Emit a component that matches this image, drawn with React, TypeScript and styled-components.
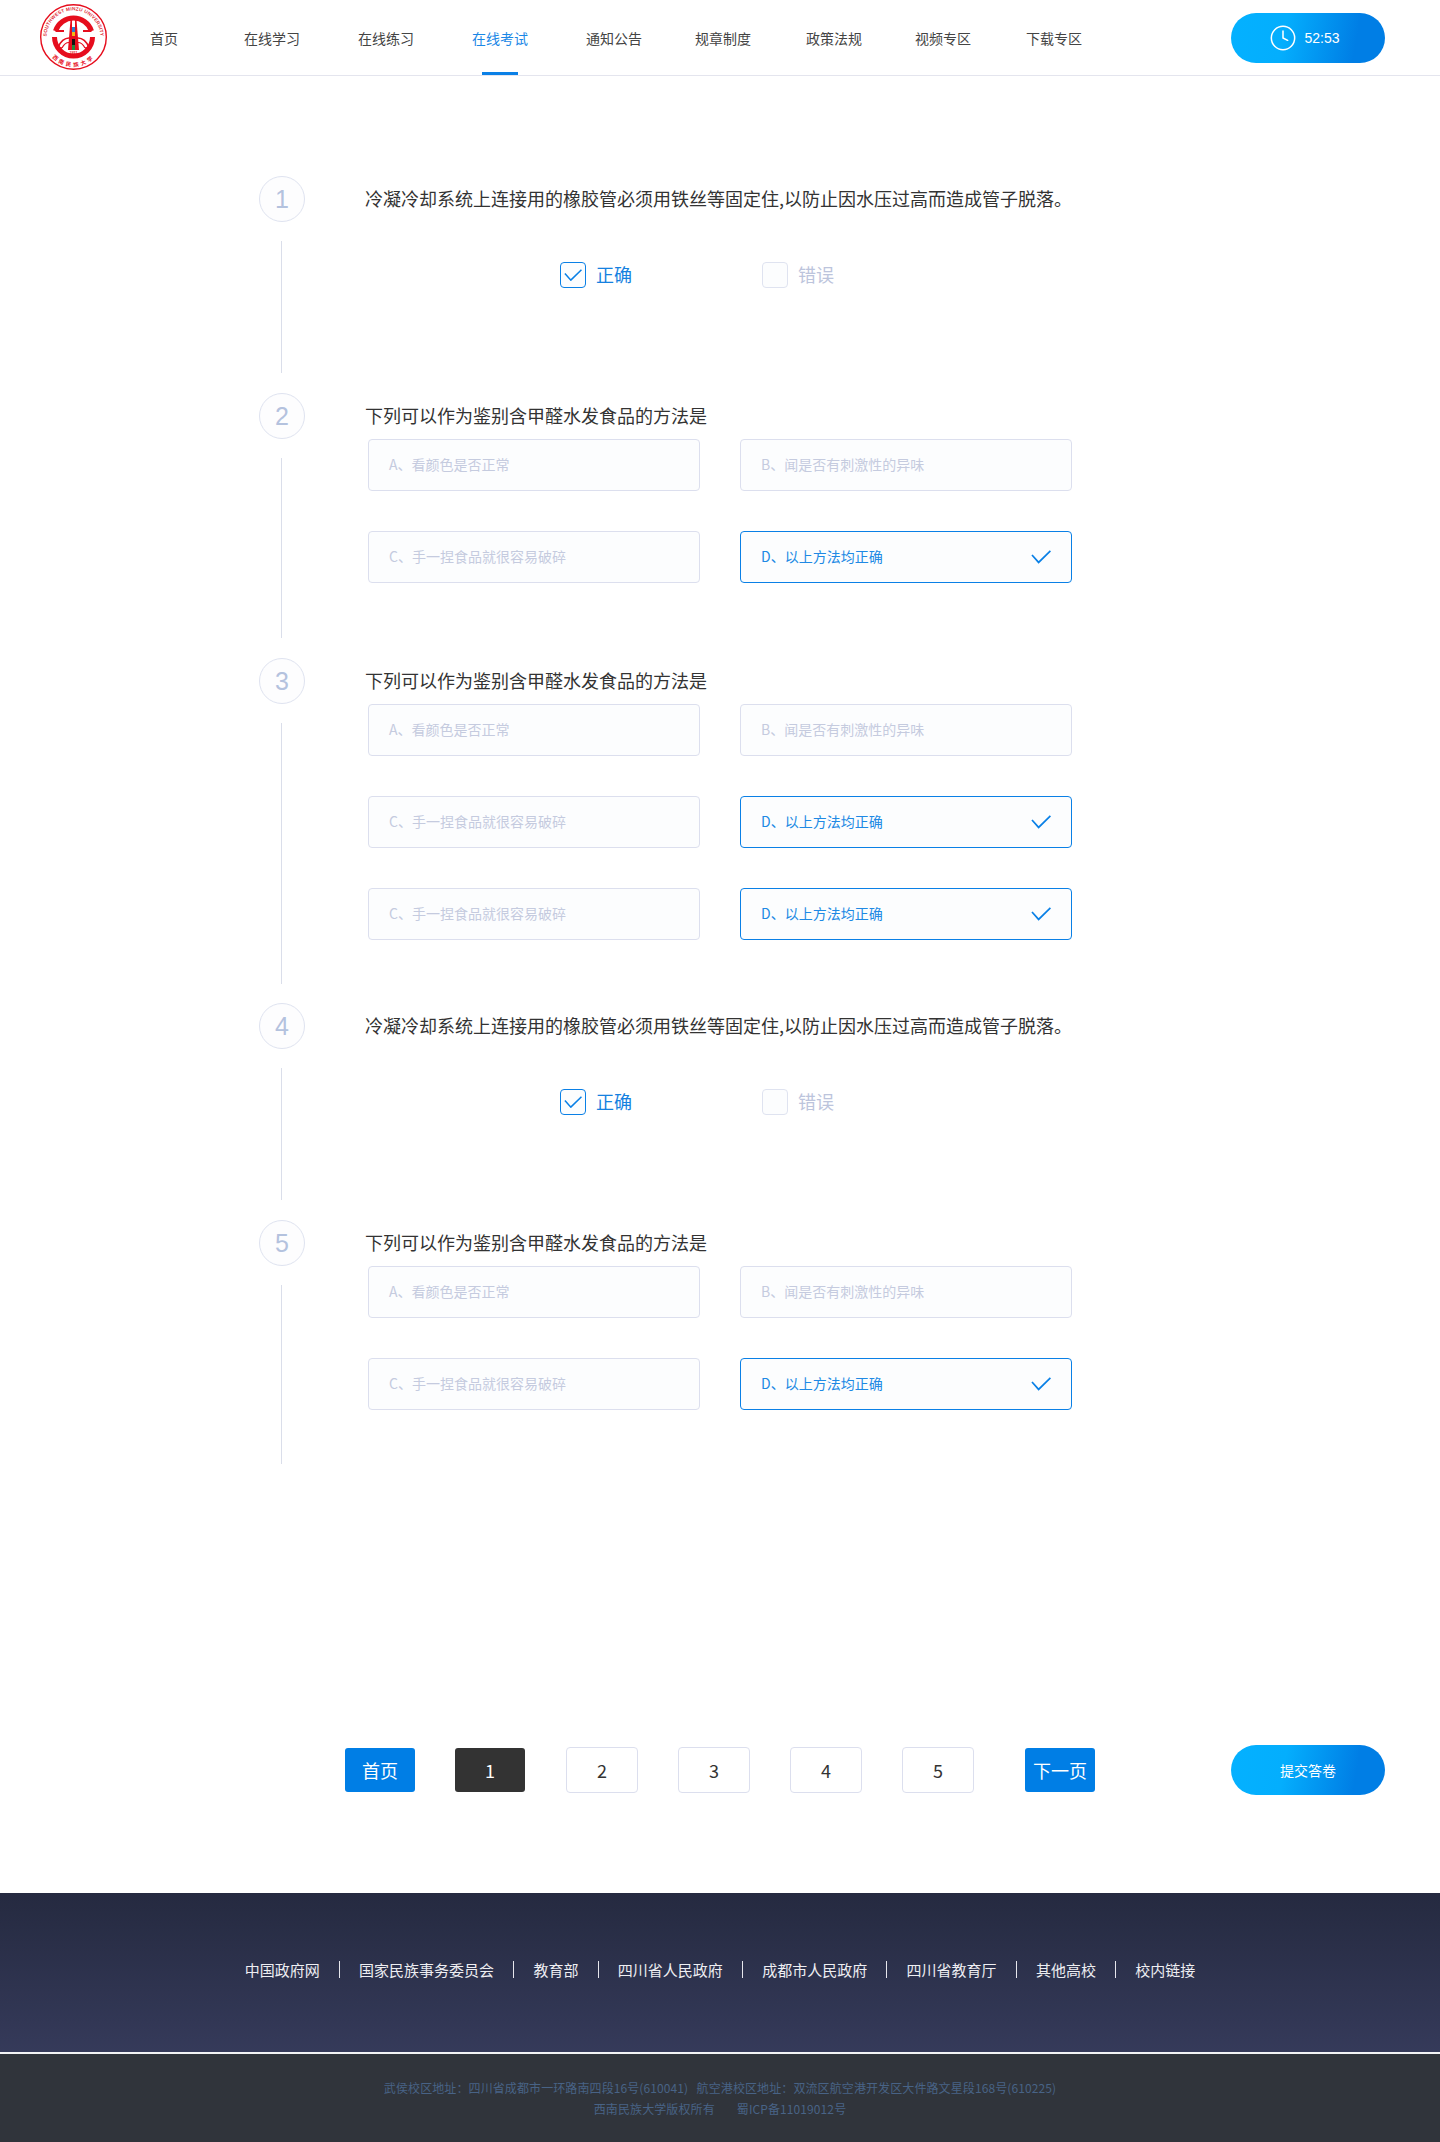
import React from 'react';
import styled, { createGlobalStyle } from 'styled-components';
import { Clock } from 'lucide-react';

const GlobalStyle = createGlobalStyle`
  html, body {
    margin: 0;
    padding: 0;
    background: #fff;
    font-family: "Noto Sans CJK SC", "Liberation Sans", sans-serif;
  }
  * {
    box-sizing: border-box;
  }
`;

const Header = styled.header`
  height: 76px;
  border-bottom: 1px solid #e4e5ee;
  display: flex;
  align-items: center;
  padding: 0 55px 0 40px;
`;

const LogoBox = styled.div`
  width: 67px;
  height: 66px;
  margin-top: -1px;
  flex: none;
`;

const Nav = styled.nav`
  display: flex;
  height: 75px;
  margin-left: 43px;
`;

const NavItem = styled.a<{ $gap: number; $active?: boolean }>`
  position: relative;
  display: flex;
  align-items: center;
  margin-left: ${(props) => props.$gap}px;
  font-size: 14px;
  color: ${(props) => (props.$active ? '#1a87e6' : '#444')};
  &::after {
    content: '';
    display: ${(props) => (props.$active ? 'block' : 'none')};
    position: absolute;
    left: 10px;
    right: 10px;
    bottom: 0;
    height: 3px;
    background: #0a80e6;
  }
`;

const Pill = styled.div`
  width: 154px;
  display: flex;
  align-items: center;
  justify-content: center;
  border-radius: 25px;
  background: linear-gradient(100deg, #04b1ff 0%, #04aefd 35%, #007ee5 80%);
  color: #fff;
  font-size: 14px;
`;

const TimerPill = styled(Pill)`
  height: 50px;
  margin-left: auto;
  padding-right: 7px;
  gap: 7px;
  font-family: "Liberation Sans", sans-serif;
`;

const SubmitPill = styled(Pill)`
  height: 50px;
  margin-left: auto;
`;

const Main = styled.main`
  padding: 100px 55px 98px 259px;
`;

const Question = styled.section<{ $height: number }>`
  display: flex;
  height: ${(props) => props.$height}px;
`;

const Rail = styled.div<{ $tail: number }>`
  width: 46px;
  flex: none;
  display: flex;
  flex-direction: column;
  padding-bottom: ${(props) => props.$tail}px;
`;

const Num = styled.div`
  width: 46px;
  height: 46px;
  flex: none;
  border-radius: 50%;
  border: 1px solid #dfe3f0;
  background: #fdfdfe;
  display: flex;
  align-items: center;
  justify-content: center;
  font-family: "Liberation Sans", sans-serif;
  font-size: 25px;
  color: #b4c2de;
`;

const RailLine = styled.div`
  width: 1px;
  flex: 1;
  margin: 19px 0 0 22px;
  background: #dadeea;
`;

const Body = styled.div`
  margin-left: 61px;
  flex: 1;
`;

const Title = styled.div`
  height: 46px;
  line-height: 44px;
  margin-left: -1px;
  font-size: 18px;
  color: #333;
  white-space: nowrap;
`;

const Judge = styled.div`
  display: flex;
  margin: 40px 0 0 194px;
`;

const JudgeItem = styled.div<{ $on?: boolean }>`
  width: 202px;
  height: 26px;
  line-height: 24px;
  display: flex;
  gap: 10px;
  font-size: 18px;
  color: ${(props) => (props.$on ? '#1581e0' : '#bcc4dc')};
`;

const Box = styled.span<{ $on?: boolean }>`
  width: 26px;
  height: 26px;
  border-radius: 4px;
  border: 1px solid ${(props) => (props.$on ? '#0a80e6' : '#dfe3f0')};
  background: #fcfdfe;
  display: flex;
  align-items: center;
  justify-content: center;
`;

const Options = styled.div`
  display: grid;
  grid-template-columns: 332px 332px;
  column-gap: 40px;
  row-gap: 40px;
  margin-left: 2px;
`;

const Option = styled.div<{ $on?: boolean }>`
  height: 52px;
  padding: 0 20px 0 20px;
  display: flex;
  align-items: center;
  justify-content: space-between;
  border-radius: 4px;
  border: 1px solid ${(props) => (props.$on ? '#0a80e6' : '#dcdfee')};
  background: #fcfdfe;
  font-size: 14px;
  line-height: 18px;
  color: ${(props) => (props.$on ? '#2089e4' : '#c5cbdf')};
`;

const OptionText = styled.span`
  margin-top: -2px;
`;

const Pager = styled.div`
  display: flex;
  align-items: center;
  gap: 40px;
  margin: 281px 0 0 86px;
  height: 50px;
`;

const PageBtn = styled.div<{ $bg: string; $after?: number }>`
  width: 70px;
  height: 44px;
  margin-left: ${(props) => props.$after || 0}px;
  border-radius: 3px;
  background: ${(props) => props.$bg};
  color: #fff;
  font-size: 18px;
  display: flex;
  align-items: center;
  justify-content: center;
`;

const PageNum = styled.div<{ $after?: number }>`
  width: 72px;
  height: 46px;
  margin-left: ${(props) => props.$after || 0}px;
  border-radius: 4px;
  border: 1px solid #dcdfee;
  background: #fff;
  color: #333;
  font-size: 18px;
  display: flex;
  align-items: center;
  justify-content: center;
`;

const Links = styled.div`
  height: 159px;
  padding-bottom: 6px;
  background: linear-gradient(180deg, #252a40 0%, #353a5a 100%);
  display: flex;
  align-items: center;
  justify-content: center;
  color: #eeeef2;
  font-size: 15px;
`;

const LinkItem = styled.a`
  display: flex;
  align-items: center;
  &:not(:last-child)::after {
    content: '';
    width: 1px;
    height: 17px;
    margin: 0 19.2px;
    background: #e6e6ec;
  }
`;

const Copy = styled.div`
  height: 90px;
  border-top: 2px solid #f2f3f5;
  background: #30343b;
  padding-top: 23px;
  text-align: center;
  font-size: 12px;
  letter-spacing: 0.1px;
  line-height: 21px;
  color: #486386;
`;

const CopyGap = styled.span`
  margin-left: 22px;
`;

function Tick({ width }: { width: number }) {
  return (
    <svg width={width} height={(width * 14) / 20} viewBox="0 0 20 14" fill="none">
      <path d="M1 5 L7.6 12.4 L19.4 0.8" stroke="#0a80e6" strokeWidth="1.7" />
    </svg>
  );
}

function Logo() {
  return (
    <svg width="67" height="66" viewBox="0 0 67 66">
      <defs>
        <path id="logoTop" d="M7.6 41 A27 27 0 1 1 59.4 41" fill="none" />
        <path id="logoBottom" d="M11 52 A29 29 0 0 0 56 52" fill="none" />
      </defs>
      <ellipse cx="33.5" cy="33" rx="32.8" ry="32.3" fill="#fff" stroke="#e60d1d" strokeWidth="1.4" />
      <text fontFamily="Liberation Sans, sans-serif" fontSize="4.8" fontWeight="700" fill="#e0323c" letterSpacing="0.2">
        <textPath href="#logoTop" startOffset="50%" textAnchor="middle">
          SOUTHWEST MINZU UNIVERSITY
        </textPath>
      </text>
      <text fontFamily="Noto Sans CJK SC, sans-serif" fontSize="5.5" fontWeight="700" fill="#e60d1d" letterSpacing="2.5">
        <textPath href="#logoBottom" startOffset="50%" textAnchor="middle">
          西南民族大学
        </textPath>
      </text>
      <path d="M15.5 27 A19 19 0 0 1 51.5 27" fill="none" stroke="#e60d1d" strokeWidth="5" />
      <path d="M15.5 27 L24 27 M51.5 27 L43 27" stroke="#e60d1d" strokeWidth="2" />
      <path d="M52.5 33 A19 19 0 0 1 14.5 33" fill="none" stroke="#e60d1d" strokeWidth="5" />
      <path d="M30.5 16 L32 16 L32 46 L28 46 Z" fill="#e60d1d" />
      <path d="M35 16 L36.5 16 L39 46 L35 46 Z" fill="#e60d1d" />
      <rect x="32" y="23" width="3" height="5" fill="#2a7fd0" />
      <rect x="32" y="28" width="3" height="4" fill="#f2b816" />
      <rect x="32" y="32" width="3" height="3" fill="#e60d1d" />
      <rect x="32" y="35" width="3" height="6" fill="#111" />
      <rect x="32" y="41" width="3" height="5" fill="#1d8a3c" />
      <path d="M18 44 C20 37 25 34 29 34 M49 44 C47 37 42 34 38 34" fill="none" stroke="#e60d1d" strokeWidth="1.6" />
      <path d="M22 44 C24 40 26 38.5 29 38.5 M45 44 C43 40 41 38.5 38 38.5" fill="none" stroke="#e60d1d" strokeWidth="1.2" />
      <path d="M18 44 L22 44 M45 44 L49 44" stroke="#e60d1d" strokeWidth="1.4" />
      <text x="33.5" y="50" textAnchor="middle" fontFamily="Liberation Sans, sans-serif" fontSize="3.6" fontWeight="700" fill="#e60d1d">
        1951
      </text>
    </svg>
  );
}

const navItems = [
  { label: '首页', gap: 0 },
  { label: '在线学习', gap: 66 },
  { label: '在线练习', gap: 58 },
  { label: '在线考试', gap: 58, active: true },
  { label: '通知公告', gap: 58 },
  { label: '规章制度', gap: 53 },
  { label: '政策法规', gap: 55 },
  { label: '视频专区', gap: 53 },
  { label: '下载专区', gap: 55 },
];

const footerLinks = ['中国政府网', '国家民族事务委员会', '教育部', '四川省人民政府', '成都市人民政府', '四川省教育厅', '其他高校', '校内链接'];

const longTitle = '冷凝冷却系统上连接用的橡胶管必须用铁丝等固定住,以防止因水压过高而造成管子脱落。';
const shortTitle = '下列可以作为鉴别含甲醛水发食品的方法是';

const optA = 'A、看颜色是否正常';
const optB = 'B、闻是否有刺激性的异味';
const optC = 'C、手一捏食品就很容易破碎';
const optD = 'D、以上方法均正确';

const questions = [
  { no: 1, height: 217, tail: 20, title: longTitle },
  { no: 2, height: 265, tail: 20, title: shortTitle, options: [optA, optB, optC, optD] },
  { no: 3, height: 345, tail: 19, title: shortTitle, options: [optA, optB, optC, optD, optC, optD] },
  { no: 4, height: 217, tail: 20, title: longTitle },
  { no: 5, height: 244, tail: 0, title: shortTitle, options: [optA, optB, optC, optD] },
];

export default function App() {
  return (
    <>
      <GlobalStyle />
      <Header>
        <LogoBox>
          <Logo />
        </LogoBox>
        <Nav>
          {navItems.map((item) => (
            <NavItem key={item.label} $gap={item.gap} $active={item.active}>
              {item.label}
            </NavItem>
          ))}
        </Nav>
        <TimerPill>
          <Clock size={28} strokeWidth={1.3} />
          52:53
        </TimerPill>
      </Header>
      <Main>
        {questions.map((q) => (
          <Question key={q.no} $height={q.height}>
            <Rail $tail={q.tail}>
              <Num>{q.no}</Num>
              <RailLine />
            </Rail>
            <Body>
              <Title>{q.title}</Title>
              {q.options ? (
                <Options>
                  {q.options.map((opt, i) => (
                    <Option key={i} $on={opt === optD}>
                      <OptionText>{opt}</OptionText>
                      {opt === optD && <Tick width={20} />}
                    </Option>
                  ))}
                </Options>
              ) : (
                <Judge>
                  <JudgeItem $on>
                    <Box $on>
                      <Tick width={18} />
                    </Box>
                    正确
                  </JudgeItem>
                  <JudgeItem>
                    <Box />
                    错误
                  </JudgeItem>
                </Judge>
              )}
            </Body>
          </Question>
        ))}
        <Pager>
          <PageBtn $bg="#007ee5">首页</PageBtn>
          <PageBtn $bg="#333333">1</PageBtn>
          <PageNum $after={1}>2</PageNum>
          <PageNum>3</PageNum>
          <PageNum>4</PageNum>
          <PageNum>5</PageNum>
          <PageBtn $bg="#007ee5" $after={11}>
            下一页
          </PageBtn>
          <SubmitPill>提交答卷</SubmitPill>
        </Pager>
      </Main>
      <footer>
        <Links>
          {footerLinks.map((link) => (
            <LinkItem key={link}>{link}</LinkItem>
          ))}
        </Links>
        <Copy>
          <div>武侯校区地址：四川省成都市一环路南四段16号(610041)&nbsp;&nbsp;&nbsp;航空港校区地址：双流区航空港开发区大件路文星段168号(610225)</div>
          <div>
            西南民族大学版权所有
            <CopyGap>蜀ICP备11019012号</CopyGap>
          </div>
        </Copy>
      </footer>
    </>
  );
}
